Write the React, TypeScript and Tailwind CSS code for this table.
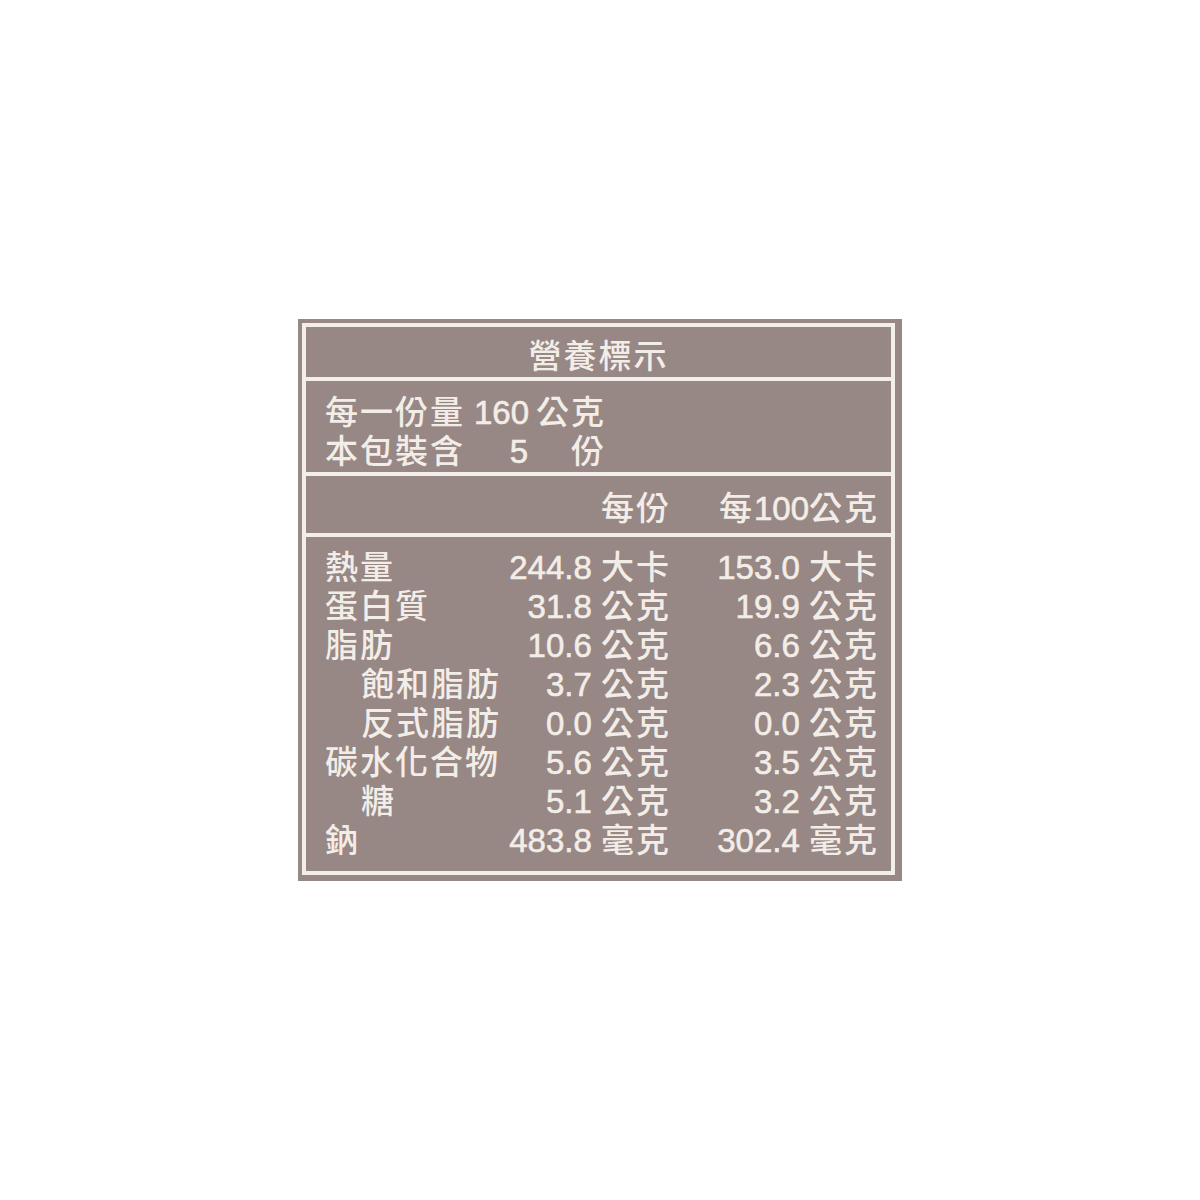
const font = { fontFamily: '"Liberation Sans", "Noto Sans CJK TC", sans-serif' }

type Row = { label: string; indent?: boolean; per: string; perUnit: string; hundred: string; hundredUnit: string }

const rows: Row[] = [
  { label: "熱量", per: "244.8", perUnit: "大卡", hundred: "153.0", hundredUnit: "大卡" },
  { label: "蛋白質", per: "31.8", perUnit: "公克", hundred: "19.9", hundredUnit: "公克" },
  { label: "脂肪", per: "10.6", perUnit: "公克", hundred: "6.6", hundredUnit: "公克" },
  { label: "飽和脂肪", indent: true, per: "3.7", perUnit: "公克", hundred: "2.3", hundredUnit: "公克" },
  { label: "反式脂肪", indent: true, per: "0.0", perUnit: "公克", hundred: "0.0", hundredUnit: "公克" },
  { label: "碳水化合物", per: "5.6", perUnit: "公克", hundred: "3.5", hundredUnit: "公克" },
  { label: "糖", indent: true, per: "5.1", perUnit: "公克", hundred: "3.2", hundredUnit: "公克" },
  { label: "鈉", per: "483.8", perUnit: "毫克", hundred: "302.4", hundredUnit: "毫克" },
]

// digits are a touch heavier on the label than Liberation Sans regular
const num = "[-webkit-text-stroke:0.6px_#f3ede7]"

function Value({ n, unit }: { n: string; unit: string }) {
  return (
    <>
      <span className={num}>{n}</span> <span className="tracking-[2px]">{unit}</span>
    </>
  )
}

export default function App() {
  return (
    <div className="w-[1200px] h-[1200px] bg-white flex items-center justify-center" style={font}>
      <div className="w-[604px] bg-[#978785] pt-[4px] pl-[4px] pr-[7px] pb-[6px] text-[33px] font-medium text-[#f3ede7]">
        <div className="border-4 border-[#f4eee8]">
          <div className="h-[50px] pt-[11px] leading-[38px] text-center tracking-[2px]">營養標示</div>

          <div className="border-t-4 border-[#f4eee8] h-[95px] pt-[12px] pl-[19px] leading-[39px]">
            <div className="flex">
              <span className="w-[149px] tracking-[2px]">每一份量</span>
              <span className={`w-[44px] text-right ${num}`}>160</span>
              <span className="w-[88px] text-right tracking-[2px]">公克</span>
            </div>
            <div className="flex">
              <span className="w-[149px] tracking-[2px]">本包裝含</span>
              <span className={`w-[54px] text-right ${num}`}>5</span>
              <span className="w-[78px] text-right tracking-[2px]">份</span>
            </div>
          </div>

          <div className="border-t-4 border-[#f4eee8] h-[61px] pt-[13px] pr-[12px] leading-[39px] flex justify-end tracking-[2px]">
            <span className="text-right">每份</span>
            <span className="w-[208px] text-right">
              每<span className={`tracking-normal ${num}`}>100</span>公克
            </span>
          </div>

          <div className="border-t-4 border-[#f4eee8] h-[338px] pt-[11px] pl-[19px] pr-[12px] leading-[39px]">
            {rows.map((r) => (
              <div key={r.label} className="flex">
                <span className={`flex-1 tracking-[2px] ${r.indent ? "pl-[36px]" : ""}`}>{r.label}</span>
                <span className="text-right whitespace-nowrap">
                  <Value n={r.per} unit={r.perUnit} />
                </span>
                <span className="w-[208px] text-right whitespace-nowrap">
                  <Value n={r.hundred} unit={r.hundredUnit} />
                </span>
              </div>
            ))}
          </div>
        </div>
      </div>
    </div>
  )
}
